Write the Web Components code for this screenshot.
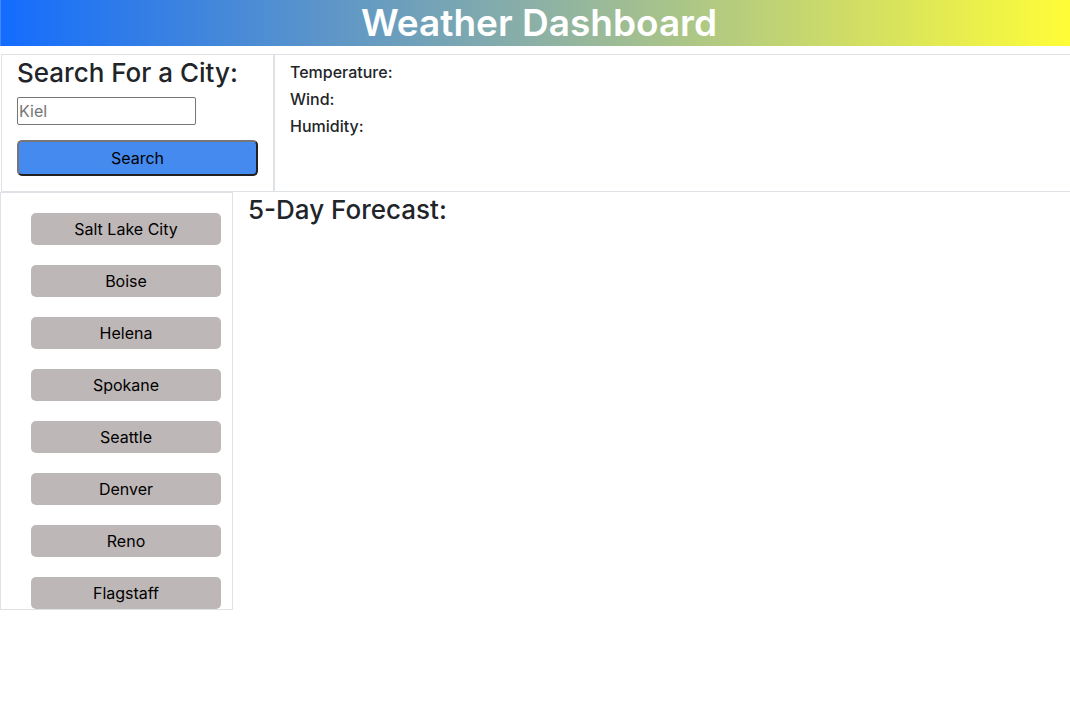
<!DOCTYPE html>
<html lang="en">
<head>
<meta charset="utf-8">
<title>Weather Dashboard</title>
<style>
body { margin: 0; background: #fff; color: #212529; font: 400 16px/24px Inter, "Liberation Sans", sans-serif; overflow-x: hidden; }
</style>
</head>
<body>
<weather-dashboard></weather-dashboard>
<script>
const base = '*{box-sizing:border-box} h1,h2,p{margin:0;font-weight:500} button,input{font:inherit;margin:0}';
function define(name, css, html) {
  customElements.define(name, class extends HTMLElement {
    constructor() {
      super();
      this.attachShadow({ mode: 'open' }).innerHTML = `<style>${base}${css}</style>${html}`;
    }
  });
}

define('page-banner', `
:host{display:block;background:linear-gradient(to right,#136cfe,#8bb0a6,#fffd38) border-box;color:#fff;text-align:center;padding-left:7px;border-left:1px solid rgba(255,255,255,.2)}
h1{font-size:37px;line-height:46px;font-weight:600}
`, '<h1><slot></slot></h1>');

define('city-search', `
:host{display:block;border:1px solid #dee2e6;padding:0 15px 15px;box-sizing:border-box}
form{display:flex;flex-direction:column;align-items:flex-start}
label{font-size:26px;line-height:36px;font-weight:500;white-space:nowrap}
input{width:179px;height:28px;margin:6px 0 15px;padding:1px;border:1px solid #767676;border-radius:2px;background:#fff}
input::placeholder{color:#757575;opacity:1}
button{width:100%;height:36px;padding:0;border:2px solid;border-color:#767676 #212121 #212121 #767676;border-radius:5px;background:#448aef;color:#000}
`, `<form onsubmit="return false"><label for="city">Search For a City:</label>
<input id="city" type="text" placeholder="Kiel"><button type="submit">Search</button></form>`);

define('current-weather', `
:host{display:block;border:1px solid #dee2e6;border-right:0;padding:8px 15px;box-sizing:border-box}
p{line-height:19px;margin-bottom:8px}
`, '<p>Temperature:</p><p>Wind:</p><p>Humidity:</p>');

define('city-button', `
:host{display:block}
button{display:block;width:100%;height:32px;padding:0;border:0;border-radius:5px;background:#beb7b7;color:#000}
`, '<button type="button"><slot></slot></button>');

define('city-list', `
:host{display:flex;flex-direction:column;gap:20px;border:1px solid #dee2e6;padding:20px 11px 0 30px;box-sizing:border-box}
`, '<slot></slot>');

define('day-forecast', `
:host{display:block;padding:0 15px}
h2{font-size:26px;line-height:36px}
`, '<h2>5-Day Forecast:</h2>');

define('weather-dashboard', `
:host{display:block}
.now{display:grid;grid-template-columns:273px 1fr;margin-top:8px;padding-left:1px}
.later{display:grid;grid-template-columns:233px 1fr;align-items:start}
`, `<page-banner>Weather Dashboard</page-banner>
<main><div class="now"><city-search></city-search><current-weather></current-weather></div>
<div class="later"><city-list>${['Salt Lake City','Boise','Helena','Spokane','Seattle','Denver','Reno','Flagstaff'].map(c => `<city-button>${c}</city-button>`).join('')}</city-list><day-forecast></day-forecast></div></main>`);
</script>
</body>
</html>
